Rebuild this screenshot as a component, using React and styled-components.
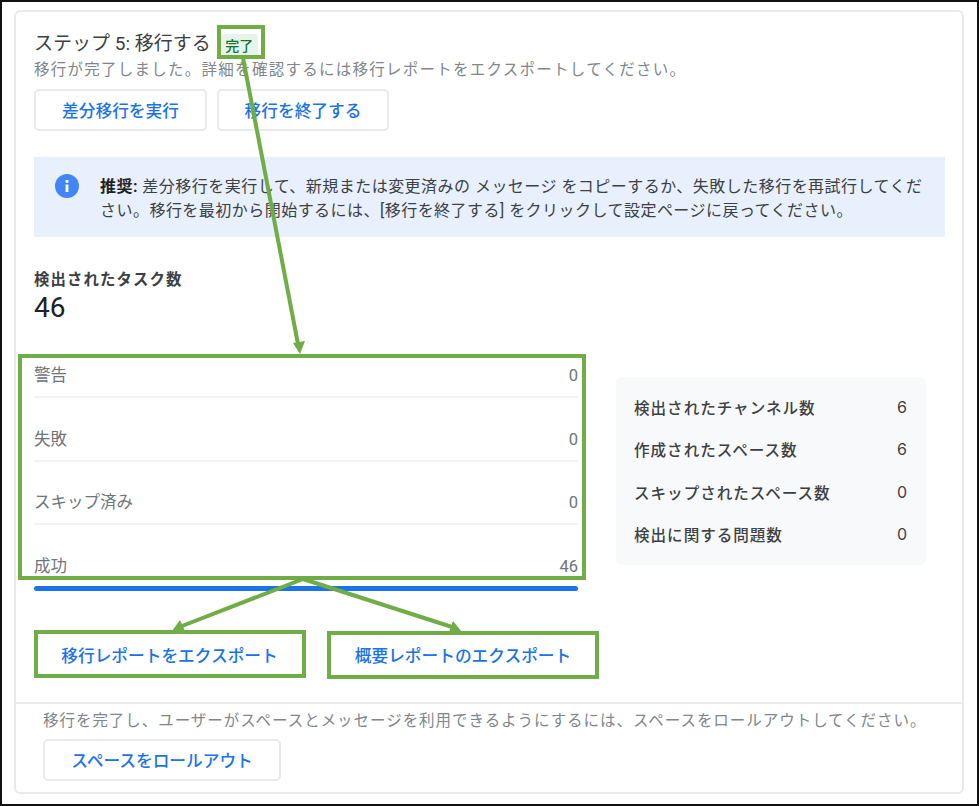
import React from 'react'
import styled, { createGlobalStyle } from 'styled-components'

const GlobalStyle = createGlobalStyle`
  html, body {
    margin: 0;
    background: #fff;
  }
  * {
    box-sizing: border-box;
  }
  body {
    font-family: Roboto, "Noto Sans CJK JP", sans-serif;
  }
`

const Page = styled.div`
  position: relative;
  width: 979px;
  height: 806px;
  overflow: hidden;
`

const Frame = styled.div`
  height: 100%;
  border: 2px solid #111;
  padding: 8px 13px 10px 12px;
`

const Card = styled.section`
  height: 784px;
  border: 2px solid #e8eaed;
  border-radius: 6px;
  background: #fff;
`

const Main = styled.div`
  padding: 20px 17px 0 18px;
`

const TitleRow = styled.div`
  display: flex;
  align-items: center;
  gap: 10px;
  height: 24px;
`

const Title = styled.h2`
  margin: 0;
  font-size: 19px;
  font-weight: 400;
  line-height: 24px;
  color: #3c4043;
`

const Badge = styled.span`
  display: inline-flex;
  align-items: center;
  justify-content: center;
  width: 37px;
  height: 21px;
  margin-top: 1px;
  border-radius: 4px;
  background: #e6f4ea;
  color: #137333;
  font-size: 14px;
  font-weight: 500;
`

const Muted = styled.p`
  margin: 2px 0 0;
  font-size: 15.5px;
  line-height: 24px;
  letter-spacing: 1.26px;
  color: #80868b;
  white-space: nowrap;
`

const ButtonRow = styled.div`
  display: flex;
  gap: ${(p) => p.$gap || 10}px;
  margin-top: ${(p) => p.$top || 7}px;
`

const Button = styled.button`
  width: ${(p) => p.$width}px;
  height: ${(p) => p.$height || 42}px;
  padding: 0;
  border: 2px solid #e8eaed;
  border-radius: 5px;
  background: #fff;
  color: #1a73e8;
  font-family: inherit;
  font-size: 16.7px;
  font-weight: 500;
  white-space: nowrap;
`

const Alert = styled.div`
  display: flex;
  align-items: flex-start;
  gap: 21px;
  height: 80px;
  margin-top: 26px;
  padding: 17px 20px 15px 21px;
  background: #e8f0fe;
`

const AlertIcon = styled.svg`
  flex: none;
  width: 24px;
  height: 24px;
`

const AlertText = styled.p`
  margin: 1px 0 0;
  font-size: 16px;
  line-height: 24px;
  letter-spacing: 0.47px;
  color: #3c4043;
  strong {
    font-weight: 700;
    color: #202124;
  }
`

const TaskLabel = styled.div`
  margin-top: 32px;
  font-size: 15.4px;
  font-weight: 700;
  line-height: 22px;
  letter-spacing: 1.1px;
  color: #3c4043;
`

const TaskCount = styled.div`
  font-size: 28px;
  line-height: 34px;
  color: #202124;
`

const Columns = styled.div`
  display: flex;
  align-items: flex-start;
  gap: 38px;
  margin-top: 39px;
`

const Results = styled.div`
  width: 544px;
  flex: none;
`

const ResultRow = styled.div`
  display: flex;
  justify-content: space-between;
  height: ${(p) => (p.$last ? 31 : 34)}px;
  margin-bottom: ${(p) => (p.$last ? 0 : 29.5)}px;
  padding-bottom: 8px;
  border-bottom: ${(p) => (p.$last ? 'none' : '2px solid #f1f3f4')};
  font-size: 16.5px;
  line-height: 24px;
  color: #70757a;
`

const ProgressBar = styled.div`
  height: 5px;
  border-radius: 3px;
  background: #1a73e8;
`

const Summary = styled.dl`
  width: 310px;
  height: 188px;
  margin: 13px 0 0;
  padding: 9px 19px 0 18px;
  border-radius: 6px;
  background: #f8f9fa;
`

const SummaryRow = styled.div`
  display: flex;
  justify-content: space-between;
  align-items: center;
  height: 42.3px;
  font-size: 15.6px;
  font-weight: 500;
  letter-spacing: 0.95px;
  color: #3c4043;
  dt, dd {
    margin: 0;
  }
  dd {
    font-family: Inter, "Noto Sans CJK JP", sans-serif;
    font-size: 16px;
    font-weight: 400;
    letter-spacing: 0;
  }
`

const Footer = styled.div`
  margin-top: 24px;
  padding: 5px 27px 0;
  border-top: 2px solid #e8eaed;
`

const FooterText = styled(Muted)`
  margin: 0;
  letter-spacing: 0.96px;
`

const Annotations = styled.svg`
  position: absolute;
  top: 0;
  left: 0;
  width: 979px;
  height: 806px;
  pointer-events: none;
`

const results = [
  { label: '警告', value: 0 },
  { label: '失敗', value: 0 },
  { label: 'スキップ済み', value: 0 },
  { label: '成功', value: 46 },
]

const summary = [
  { label: '検出されたチャンネル数', value: 6 },
  { label: '作成されたスペース数', value: 6 },
  { label: 'スキップされたスペース数', value: 0 },
  { label: '検出に関する問題数', value: 0 },
]

const GREEN = '#70ad47'

const App = () => {
  return (
    <Page>
      <GlobalStyle />
      <Frame>
        <Card>
          <Main>
            <TitleRow>
              <Title>ステップ 5: 移行する</Title>
              <Badge>完了</Badge>
            </TitleRow>
            <Muted>移行が完了しました。詳細を確認するには移行レポートをエクスポートしてください。</Muted>
            <ButtonRow>
              <Button $width={173}>差分移行を実行</Button>
              <Button $width={172}>移行を終了する</Button>
            </ButtonRow>
            <Alert>
              <AlertIcon viewBox="0 0 24 24">
                <circle cx="12" cy="12" r="12" fill="#4285f4" />
                <rect x="10.6" y="10.5" width="2.8" height="7.5" fill="#fff" />
                <rect x="10.6" y="6" width="2.8" height="2.8" fill="#fff" />
              </AlertIcon>
              <AlertText>
                <strong>推奨:</strong> 差分移行を実行して、新規または変更済みの メッセージ をコピーするか、失敗した移行を再試行してください。移行を最初から開始するには、[移行を終了する] をクリックして設定ページに戻ってください。
              </AlertText>
            </Alert>
            <TaskLabel>検出されたタスク数</TaskLabel>
            <TaskCount>46</TaskCount>
            <Columns>
              <Results>
                {results.map((r, i) => (
                  <ResultRow key={r.label} $last={i === results.length - 1}>
                    <span>{r.label}</span>
                    <span>{r.value}</span>
                  </ResultRow>
                ))}
                <ProgressBar />
              </Results>
              <Summary>
                {summary.map((s) => (
                  <SummaryRow key={s.label}>
                    <dt>{s.label}</dt>
                    <dd>{s.value}</dd>
                  </SummaryRow>
                ))}
              </Summary>
            </Columns>
            <ButtonRow $gap={23} $top={41}>
              <Button $width={271} $height={46}>移行レポートをエクスポート</Button>
              <Button $width={270} $height={46}>概要レポートのエクスポート</Button>
            </ButtonRow>
          </Main>
          <Footer>
            <FooterText>移行を完了し、ユーザーがスペースとメッセージを利用できるようにするには、スペースをロールアウトしてください。</FooterText>
            <ButtonRow $top={6}>
              <Button $width={238}>スペースをロールアウト</Button>
            </ButtonRow>
          </Footer>
        </Card>
      </Frame>
      <Annotations viewBox="0 0 979 806">
        <g fill="none" stroke={GREEN} strokeWidth="4">
          <rect x="219" y="27" width="44" height="30" />
          <rect x="20" y="356" width="564" height="222" />
          <rect x="36" y="632" width="268" height="44" />
          <rect x="329" y="633" width="268" height="44" />
          <line x1="243" y1="58" x2="298" y2="344" />
          <line x1="303" y1="579" x2="182" y2="626" />
          <line x1="303" y1="579" x2="452" y2="627" />
        </g>
        <g fill={GREEN}>
          <polygon points="300,354 293,343 305,341" />
          <polygon points="172,631 180,620 185,631" />
          <polygon points="462,632 449,632 453,621" />
        </g>
      </Annotations>
    </Page>
  )
}

export default App
